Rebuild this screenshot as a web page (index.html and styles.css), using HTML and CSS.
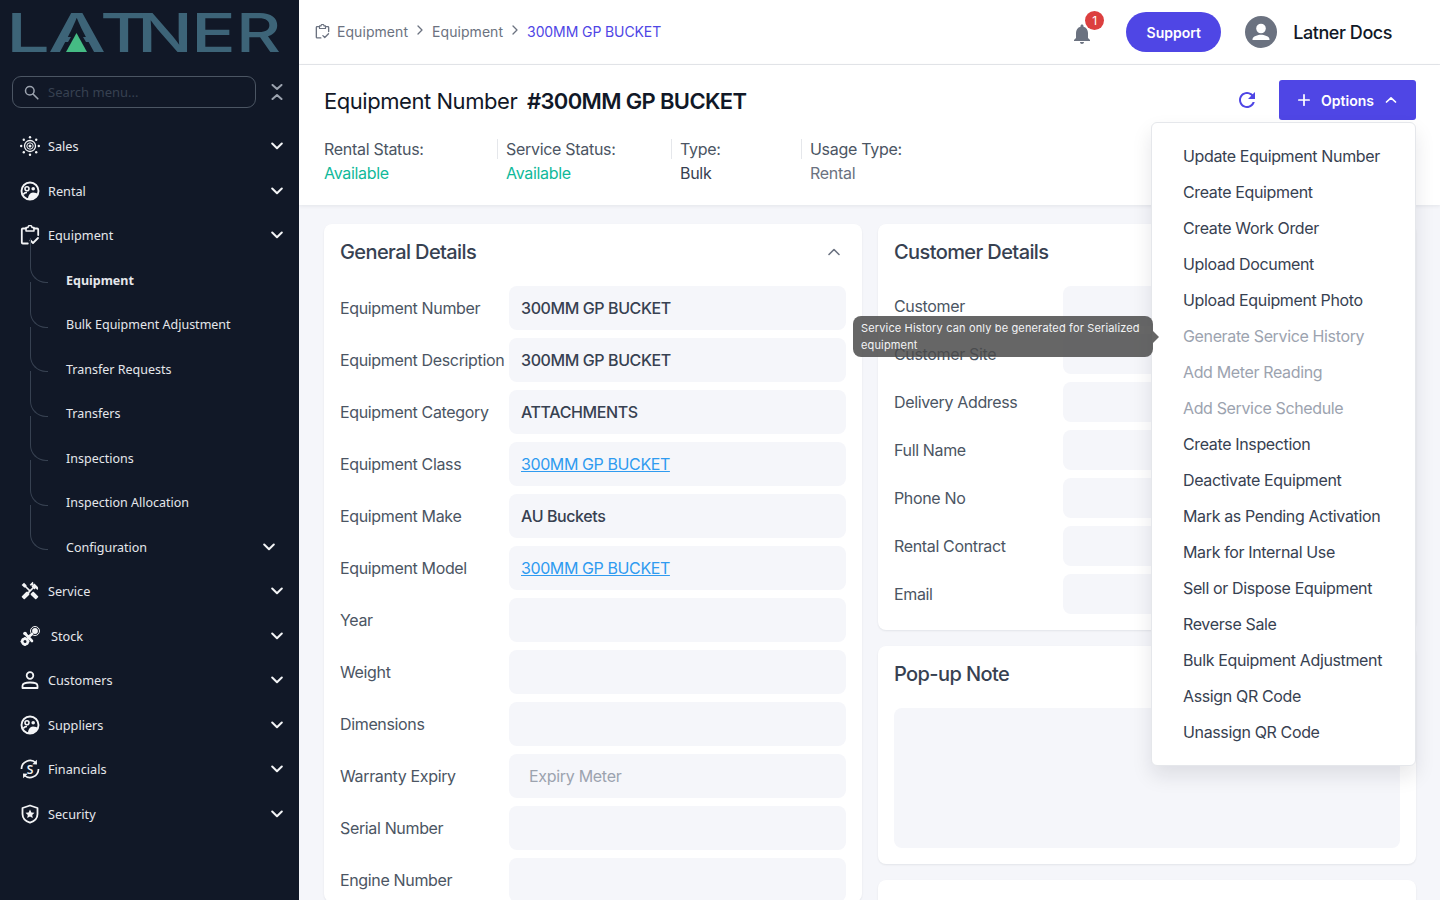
FILE: index.html
```html
<!DOCTYPE html>
<html lang="en">
<head>
  <meta charset="UTF-8" />
  <title>Equipment - 300MM GP BUCKET</title>
  <link rel="stylesheet" href="styles.css">
</head>
<body>
  <svg class="defs" width="0" height="0">
    <defs>
      <symbol id="chev" viewBox="0 0 12 8"><path d="M1.2 1.5 6 6.200l4.800-4.700" fill="none" stroke="currentColor" stroke-width="2" stroke-linecap="round" stroke-linejoin="round"/></symbol>
      <symbol id="face" viewBox="0 0 20 20"><circle cx="10" cy="10" r="8.500" fill="none" stroke="currentColor" stroke-width="1.900"/><circle cx="7" cy="7.800" r="2" fill="none" stroke="currentColor" stroke-width="1.600"/><circle cx="13.200" cy="7.800" r="1.800" fill="currentColor"/><path d="M8 18c0-3.500 2-6.500 5-6.500 2.500 0 4 .8 5 1.800-1 2.700-4 4.700-7 4.700z" fill="currentColor"/><path d="M3.200 13.500c.7-1.300 2-2 3.800-2" fill="none" stroke="currentColor" stroke-width="1.600"/></symbol>
      <symbol id="clip" viewBox="0 0 20 20"><path d="M6 3.500H2.800a1 1 0 0 0-1 1v13a1 1 0 0 0 1 1h5M14 3.500h3.200a1 1 0 0 1 1 1V10" fill="none" stroke="currentColor" stroke-width="1.800" stroke-linecap="round"/><path d="M6 2.500h2a2 2 0 0 1 4 0h2v3.500H6z" fill="none" stroke="currentColor" stroke-width="1.500" stroke-linejoin="round"/><path d="m10.500 15.500 2.500 2.500 5-5" fill="none" stroke="currentColor" stroke-width="1.800" stroke-linecap="round" stroke-linejoin="round"/></symbol>
    </defs>
  </svg>

  <div class="app">
    <aside class="sidebar">
      <div class="logo">
        <svg width="270" height="40" viewBox="0 0 270 40">
          <text x="-4" y="39" class="logo-text" textLength="44" lengthAdjust="spacingAndGlyphs">L</text>
          <text x="38" y="39" class="logo-text" textLength="58" lengthAdjust="spacingAndGlyphs">A</text>
          <text x="90" y="39" class="logo-text" textLength="48" lengthAdjust="spacingAndGlyphs">T</text>
          <text x="127" y="39" class="logo-text" textLength="56" lengthAdjust="spacingAndGlyphs">N</text>
          <text x="181" y="39" class="logo-text" textLength="45" lengthAdjust="spacingAndGlyphs">E</text>
          <text x="226" y="39" class="logo-text" textLength="45" lengthAdjust="spacingAndGlyphs">R</text>
          <path d="M67 14 52 39h30z" fill="#111827"/>
          <path d="M56 39 66.500 20 77 39z" fill="#45bb84"/>
        </svg>
      </div>

      <div class="search-row">
        <div class="search">
          <svg width="15" height="15" viewBox="0 0 15 15"><circle cx="5.800" cy="5.800" r="4.300" fill="none" stroke="#9ca3af" stroke-width="1.500"/><path d="m9 9 4.800 4.800" stroke="#9ca3af" stroke-width="1.600" stroke-linecap="round"/></svg>
          <span>Search menu...</span>
        </div>
        <svg class="collapse" width="12" height="16" viewBox="0 0 12 16"><path d="M1.500 1 6 5l4.500-4M1.500 15 6 11l4.500 4" fill="none" stroke="#9ca3af" stroke-width="2" stroke-linecap="round" stroke-linejoin="round"/></svg>
      </div>

      <nav class="nav">
        <a class="nav-row">
          <svg class="nav-icon" viewBox="0 0 20 20"><g fill="none" stroke="currentColor"><circle cx="10" cy="10" r="5.500" stroke-width="1.300"/><circle cx="10" cy="10" r="3.200" stroke-width="1"/></g><circle cx="10" cy="10" r="1.500" fill="currentColor"/><g fill="currentColor"><circle cx="10" cy="1.200" r="1.200"/><circle cx="10" cy="18.800" r="1.200"/><circle cx="1.200" cy="10" r="1.200"/><circle cx="18.800" cy="10" r="1.200"/><circle cx="3.800" cy="3.800" r="1.200"/><circle cx="16.200" cy="3.800" r="1.200"/><circle cx="3.800" cy="16.200" r="1.200"/><circle cx="16.200" cy="16.200" r="1.200"/></g></svg>
          <span>Sales</span>
          <svg class="chev"><use href="#chev"/></svg>
        </a>
        <a class="nav-row">
          <svg class="nav-icon"><use href="#face"/></svg>
          <span>Rental</span>
          <svg class="chev"><use href="#chev"/></svg>
        </a>
        <a class="nav-row">
          <svg class="nav-icon"><use href="#clip"/></svg>
          <span>Equipment</span>
          <svg class="chev"><use href="#chev"/></svg>
        </a>
        <a class="sub-row active">Equipment</a>
        <a class="sub-row">Bulk Equipment Adjustment</a>
        <a class="sub-row">Transfer Requests</a>
        <a class="sub-row">Transfers</a>
        <a class="sub-row">Inspections</a>
        <a class="sub-row">Inspection Allocation</a>
        <a class="sub-row">Configuration<svg class="chev sub-chev"><use href="#chev"/></svg></a>
        <a class="nav-row">
          <svg class="nav-icon" viewBox="0 0 24 24"><path fill="currentColor" d="M21.670 18.170l-5.300-5.300h-.99l-2.540 2.540v.99l5.300 5.300c.39.39 1.020.39 1.410 0l2.120-2.120c.39-.38.39-1.020 0-1.410z"/><path fill="currentColor" d="M17.340 10.190l1.410-1.410 2.120 2.120c1.170-1.170 1.170-3.070 0-4.240l-3.540-3.540-1.410 1.410V1.710l-.7-.71-3.540 3.540.71.71h2.830l-1.410 1.410 1.060 1.060-2.890 2.890-4.130-4.130V5.060L4.830 2.040 2 4.870 5.030 7.900h1.410l4.130 4.130-.85.85H7.600l-5.300 5.300c-.39.39-.39 1.020 0 1.410l2.120 2.120c.39.39 1.020.39 1.410 0l5.300-5.300v-2.120l5.150-5.150 1.060 1.050z"/></svg>
          <span>Service</span>
          <svg class="chev"><use href="#chev"/></svg>
        </a>
        <a class="nav-row stock">
          <svg class="nav-icon" viewBox="0 0 20 20"><circle cx="5" cy="15.500" r="2.800" fill="none" stroke="currentColor" stroke-width="2.600"/><path d="M5 11v1M5 19v1M.5 15.500h1M8.500 15.500h1" stroke="currentColor" stroke-width="1.600"/><path d="M5 7.500l7 7.500M8 11.500l4-3.500" stroke="currentColor" stroke-width="2.600" stroke-linecap="round"/><circle cx="5" cy="7.500" r="1.800" fill="currentColor"/><circle cx="15" cy="5" r="4.500" fill="none" stroke="currentColor" stroke-width="1"/><circle cx="15" cy="5" r="2.900" fill="currentColor"/></svg>
          <span>Stock</span>
          <svg class="chev"><use href="#chev"/></svg>
        </a>
        <a class="nav-row">
          <svg class="nav-icon" viewBox="0 0 20 20"><circle cx="10" cy="5.500" r="3.300" fill="none" stroke="currentColor" stroke-width="1.800"/><path d="M2.500 18v-2.200c0-2 2.500-3.300 7.500-3.300s7.500 1.300 7.500 3.300V18z" fill="none" stroke="currentColor" stroke-width="1.800" stroke-linejoin="round"/></svg>
          <span>Customers</span>
          <svg class="chev"><use href="#chev"/></svg>
        </a>
        <a class="nav-row">
          <svg class="nav-icon"><use href="#face"/></svg>
          <span>Suppliers</span>
          <svg class="chev"><use href="#chev"/></svg>
        </a>
        <a class="nav-row">
          <svg class="nav-icon" viewBox="0 0 20 20"><path d="M1.500 10a8.500 8.500 0 0 1 14.500-6M18.500 10A8.500 8.500 0 0 1 4 16" fill="none" stroke="currentColor" stroke-width="1.700"/><path d="m16.800.8.200 4.700-4.700-.2zM3.200 19.200 3 14.500l4.700.2z" fill="currentColor"/><text x="10" y="14.500" class="money">S</text></svg>
          <span>Financials</span>
          <svg class="chev"><use href="#chev"/></svg>
        </a>
        <a class="nav-row">
          <svg class="nav-icon" viewBox="0 0 20 20"><path d="M10 1.500 2.500 4v6c0 4.300 3 7.200 7.500 8.700 4.500-1.500 7.500-4.400 7.500-8.700V4z" fill="none" stroke="currentColor" stroke-width="1.800" stroke-linejoin="round"/><path d="m10 5.500 1.400 2.900 3.100.4-2.300 2.200.6 3.100-2.800-1.500-2.800 1.500.6-3.100-2.300-2.200 3.100-.4z" fill="currentColor"/></svg>
          <span>Security</span>
          <svg class="chev"><use href="#chev"/></svg>
        </a>
      </nav>
    </aside>

    <div class="main">
      <header class="topbar">
        <div class="crumbs">
          <svg class="crumb-icon"><use href="#clip"/></svg>
          <span>Equipment</span>
          <svg class="crumb-sep" width="6" height="10" viewBox="0 0 6 10"><path d="m1 1 4 4-4 4" fill="none" stroke="#6b7280" stroke-width="1.300" stroke-linecap="round" stroke-linejoin="round"/></svg>
          <span>Equipment</span>
          <svg class="crumb-sep" width="6" height="10" viewBox="0 0 6 10"><path d="m1 1 4 4-4 4" fill="none" stroke="#6b7280" stroke-width="1.300" stroke-linecap="round" stroke-linejoin="round"/></svg>
          <span class="crumb-current">300MM GP BUCKET</span>
        </div>
        <div class="top-right">
          <div class="bell">
            <svg width="24" height="24" viewBox="0 0 24 24"><path fill="#6b7280" d="M12 22c1.100 0 2-.9 2-2h-4c0 1.100.9 2 2 2zm6-6v-5c0-3.070-1.630-5.640-4.500-6.320V4c0-.83-.67-1.500-1.500-1.500s-1.500.67-1.500 1.500v.68C7.640 5.360 6 7.920 6 11v5l-2 2v1h16v-1l-2-2z"/></svg>
            <span class="badge">1</span>
          </div>
          <button class="support">Support</button>
          <svg class="avatar" width="32" height="32" viewBox="0 0 32 32"><circle cx="16" cy="16" r="16" fill="#6b7280"/><circle cx="16" cy="12.500" r="4.800" fill="#fff"/><path d="M7.500 23.500c0-3.200 5.500-4.700 8.500-4.700s8.500 1.500 8.500 4.700v.5h-17z" fill="#fff"/></svg>
          <span class="user">Latner Docs</span>
        </div>
      </header>

      <section class="head">
        <div class="head-top">
          <h1>Equipment Number <b>#300MM GP BUCKET</b></h1>
          <div class="head-actions">
            <svg class="refresh" width="24" height="24" viewBox="0 0 24 24"><path fill="#4f46e5" d="M17.650 6.350C16.200 4.900 14.210 4 12 4c-4.420 0-7.990 3.580-7.990 8s3.570 8 7.990 8c3.730 0 6.840-2.550 7.730-6h-2.080c-.82 2.330-3.040 4-5.650 4-3.310 0-6-2.690-6-6s2.690-6 6-6c1.660 0 3.140.69 4.220 1.780L13 11h7V4l-2.350 2.350z"/></svg>
            <button class="options">
              <svg width="12" height="12" viewBox="0 0 14 14"><path d="M7 1v12M1 7h12" stroke="#fff" stroke-width="2" stroke-linecap="round"/></svg>
              <span>Options</span>
              <svg width="12" height="8" viewBox="0 0 12 8"><path d="M1.500 6 6 1.800 10.500 6" fill="none" stroke="#fff" stroke-width="1.700" stroke-linecap="round" stroke-linejoin="round"/></svg>
            </button>
          </div>
        </div>
        <div class="stats">
          <div class="stat stat-rental"><span>Rental Status:</span><strong class="ok">Available</strong></div>
          <div class="stat stat-service"><span>Service Status:</span><strong class="ok">Available</strong></div>
          <div class="stat stat-type"><span>Type:</span><strong>Bulk</strong></div>
          <div class="stat"><span>Usage Type:</span><strong class="muted">Rental</strong></div>
        </div>
      </section>

      <div class="content">
        <div class="col">
          <section class="card">
            <div class="card-head">
              <h2>General Details</h2>
              <svg width="12" height="8" viewBox="0 0 12 8"><path d="M1 6.500 6 1.500l5 5" fill="none" stroke="#6b7280" stroke-width="1.600" stroke-linecap="round" stroke-linejoin="round"/></svg>
            </div>
            <div class="fields">
              <div class="field"><label>Equipment Number</label><div class="value">300MM GP BUCKET</div></div>
              <div class="field"><label>Equipment Description</label><div class="value">300MM GP BUCKET</div></div>
              <div class="field"><label>Equipment Category</label><div class="value">ATTACHMENTS</div></div>
              <div class="field"><label>Equipment Class</label><div class="value"><a>300MM GP BUCKET</a></div></div>
              <div class="field"><label>Equipment Make</label><div class="value">AU Buckets</div></div>
              <div class="field"><label>Equipment Model</label><div class="value"><a>300MM GP BUCKET</a></div></div>
              <div class="field"><label>Year</label><div class="value"></div></div>
              <div class="field"><label>Weight</label><div class="value"></div></div>
              <div class="field"><label>Dimensions</label><div class="value"></div></div>
              <div class="field"><label>Warranty Expiry</label><div class="value placeholder">Expiry Meter</div></div>
              <div class="field"><label>Serial Number</label><div class="value"></div></div>
              <div class="field"><label>Engine Number</label><div class="value"></div></div>
            </div>
          </section>
        </div>
        <div class="col">
          <section class="card card-customer">
            <div class="card-head"><h2>Customer Details</h2></div>
            <div class="fields compact">
              <div class="field"><label>Customer</label><div class="value"></div></div>
              <div class="field"><label>Customer Site</label><div class="value"></div></div>
              <div class="field"><label>Delivery Address</label><div class="value"></div></div>
              <div class="field"><label>Full Name</label><div class="value"></div></div>
              <div class="field"><label>Phone No</label><div class="value"></div></div>
              <div class="field"><label>Rental Contract</label><div class="value"></div></div>
              <div class="field"><label>Email</label><div class="value"></div></div>
            </div>
          </section>
          <section class="card card-note">
            <div class="card-head"><h2>Pop-up Note</h2></div>
            <div class="note"></div>
          </section>
          <section class="card card-empty"></section>
        </div>
      </div>

      <ul class="menu">
        <li>Update Equipment Number</li>
        <li>Create Equipment</li>
        <li>Create Work Order</li>
        <li>Upload Document</li>
        <li>Upload Equipment Photo</li>
        <li class="off">Generate Service History</li>
        <li class="off">Add Meter Reading</li>
        <li class="off">Add Service Schedule</li>
        <li>Create Inspection</li>
        <li>Deactivate Equipment</li>
        <li>Mark as Pending Activation</li>
        <li>Mark for Internal Use</li>
        <li>Sell or Dispose Equipment</li>
        <li>Reverse Sale</li>
        <li>Bulk Equipment Adjustment</li>
        <li>Assign QR Code</li>
        <li>Unassign QR Code</li>
      </ul>

      <div class="tip">Service History can only be generated for Serialized equipment</div>
    </div>
  </div>
</body>
</html>
```

FILE: styles.css
```css
* { box-sizing: border-box; }
html, body { margin: 0; height: 100%; overflow: hidden; }
body { font-family: Inter, "Liberation Sans", sans-serif; color: #374151; background: #f5f6fa; }
h1, h2 { margin: 0; font-weight: 400; }
.defs { position: absolute; }

.app { display: flex; height: 900px; }

/* sidebar */
.sidebar { width: 299px; flex: none; background: #111827; color: #e5e7eb; font-family: "Noto Sans", sans-serif; font-size: 12.7px; }
.logo { height: 76px; padding: 13px 0 0 10px; }
.logo svg { display: block; overflow: visible; }
.logo-text { font-family: Inter, sans-serif; font-weight: 500; font-size: 54px; fill: #3d6478; }
.search-row { display: flex; align-items: center; gap: 15px; padding-left: 12px; }
.search { width: 244px; height: 32px; display: flex; align-items: center; gap: 9px; padding-left: 11px; border: 1px solid #4b5563; border-radius: 9px; color: #374151; font-size: 13px; }
.nav { padding-top: 16px; }
.nav-row, .sub-row { position: relative; display: flex; align-items: center; height: 44.5px; }
.nav-row { padding-left: 20px; }
.nav-row span { margin-left: 8px; }
.nav-icon { width: 20px; height: 20px; flex: none; color: #f3f4f6; }
.stock span { margin-left: 11px; }
.chev { position: absolute; right: 16px; top: 18px; width: 12px; height: 8px; color: #f3f4f6; }
.sub-row { padding: 1px 0 0 66px; font-size: 12.5px; }
.sub-row::before { content: ""; position: absolute; left: 30px; top: -20px; width: 17px; height: 44.5px; border-left: 1px solid #374151; border-bottom: 1px solid #374151; border-bottom-left-radius: 16px; }
.sub-row.active { font-weight: 700; }
.sub-chev { right: 24px; }
.money { font-family: "Noto Sans", sans-serif; font-size: 12px; font-weight: 600; fill: currentColor; text-anchor: middle; }

/* top bar */
.main { position: relative; flex: 1; min-width: 0; display: flex; flex-direction: column; overflow: hidden; }
.topbar { height: 65px; flex: none; display: flex; align-items: center; justify-content: space-between; padding: 0 48px 0 16px; background: #fff; border-bottom: 1px solid #e5e7eb; }
.crumbs { display: flex; align-items: center; margin-bottom: 2px; font-size: 14px; color: #6b7280; letter-spacing: .06px; }
.crumb-icon { width: 15px; height: 15px; margin-right: 7px; }
.crumb-sep { margin: 0 9px 3px 9px; }
.crumb-current { color: #4f46e5; letter-spacing: -.1px; }
.top-right { display: flex; align-items: center; }
.bell { position: relative; width: 24px; height: 24px; margin: 4px 32px 0 0; }
.badge { position: absolute; left: 15px; top: -11px; width: 19px; height: 19px; border-radius: 50%; background: #dc3f3f; color: #fff; font-size: 12px; line-height: 19px; text-align: center; }
.support { width: 95px; height: 40px; border: none; border-radius: 20px; background: #4f46e5; color: #fff; font: 600 14px Inter, sans-serif; }
.avatar { margin: 0 16px 0 24px; }
.user { font-size: 18px; font-weight: 500; color: #111827; letter-spacing: -.45px; }

/* equipment header */
.head { position: relative; z-index: 1; height: 140px; flex: none; padding: 16px 24px 0 25px; background: #fff; box-shadow: 0 1px 4px rgba(17, 24, 39, .08); }
.head-top { display: flex; align-items: center; justify-content: space-between; height: 40px; }
h1 { font-size: 22px; color: #111827; letter-spacing: -.45px; }
h1 b { margin-left: 4px; font-weight: 600; letter-spacing: -.65px; }
.head-actions { display: flex; align-items: center; gap: 20px; margin-bottom: 2px; }
.options { width: 137px; height: 40px; display: flex; align-items: center; justify-content: center; gap: 11px; border: none; border-radius: 3px; background: #4f46e5; color: #fff; font: 600 14px Inter, sans-serif; }
.stats { display: flex; margin-top: 18px; font-size: 16px; letter-spacing: -.3px; }
.stat { display: flex; flex-direction: column; gap: 4px; line-height: 20px; color: #4b5563; }
.stat span { height: 20px; }
.stat strong { font-weight: 400; color: #374151; }
.stat strong.ok { color: #10b99a; }
.stat strong.muted { color: #6b7280; }
.stat-rental, .stat-service, .stat-type { position: relative; }
.stat-rental { width: 182px; }
.stat-service { width: 174px; }
.stat-type { width: 130px; }
.stat-rental::after, .stat-service::after, .stat-type::after { content: ""; position: absolute; right: 8px; top: 0; width: 1px; height: 20px; background: #e5e7eb; }

/* cards */
.content { flex: 1; min-height: 0; display: grid; grid-template-columns: 538px 538px; gap: 16px; padding: 19px 24px 0 25px; }
.col { display: flex; flex-direction: column; gap: 16px; min-height: 0; }
.card { flex: none; padding: 0 16px; background: #fff; border-radius: 8px; box-shadow: 0 1px 2px rgba(17, 24, 39, .08); }
.card-head { height: 62px; display: flex; align-items: center; justify-content: space-between; padding: 0 6px 7px 0; }
h2 { font-size: 20px; font-weight: 500; color: #374151; letter-spacing: -.6px; }
.fields { display: flex; flex-direction: column; gap: 8px; }
.field { display: flex; align-items: center; }
.field label { width: 169px; flex: none; font-size: 16px; color: #4b5563; white-space: nowrap; letter-spacing: -.35px; }
.value { flex: 1; height: 44px; padding: 0 12px; border-radius: 8px; background: #f5f6fa; font-size: 16px; font-weight: 500; line-height: 44px; color: #374151; letter-spacing: -.4px; }
.value a { color: #2f9bf0; font-weight: 400; text-decoration: underline; }
.value.placeholder { padding-left: 20px; color: #9ca3af; font-weight: 400; letter-spacing: -.3px; }
.compact .value { height: 40px; }
.card-customer { height: 406px; }
.card-note { height: 218px; }
.card-note .card-head { height: 56px; padding-bottom: 0; }
.note { height: 140px; margin-top: 6px; border-radius: 8px; background: #f5f6fa; }
.card-empty { height: 60px; }

/* overlays */
.menu { position: absolute; z-index: 2; left: 852px; top: 122px; width: 265px; height: 644px; margin: 0; padding: 15px 0 0 31px; list-style: none; background: #fff; border: 1px solid #e5e7eb; border-radius: 6px; box-shadow: 0 10px 20px rgba(17, 24, 39, .1); font-size: 16px; color: #374151; letter-spacing: -.36px; }
.menu li { height: 36px; line-height: 36px; white-space: nowrap; }
.menu li.off { color: #9ca3af; }
.tip { position: absolute; z-index: 3; left: 554px; top: 316px; width: 300px; height: 41px; padding: 4px 8px; border-radius: 8px; background: rgba(75, 75, 75, .85); color: #f3f4f6; font-size: 11px; line-height: 17px; letter-spacing: .15px; }
.tip::after { content: ""; position: absolute; right: -6px; top: 15px; border-left: 6px solid rgba(75, 75, 75, .85); border-top: 6px solid transparent; border-bottom: 6px solid transparent; }
```
